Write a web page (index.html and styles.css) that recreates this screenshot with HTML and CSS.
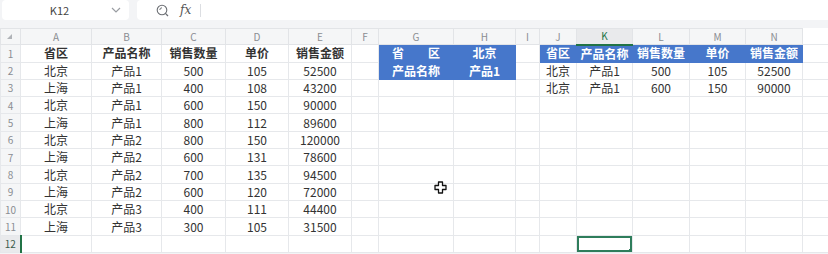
FILE: index.html
```html
<!DOCTYPE html>
<html lang="zh-CN">
<head>
    <meta charset="UTF-8">
    <title>K12</title>
    <link rel="stylesheet" href="styles.css">
</head>
<body>
    <div class="app">
        <div class="toolbar">
            <div class="namebox">
                <span class="ref">K12</span>
                <svg class="chev" width="10" height="6" viewBox="0 0 10 6"><path d="M1 1 L5 5 L9 1" fill="none" stroke="#9a9da2" stroke-width="1.2"/></svg>
            </div>
            <div class="formula">
                <svg class="zoom-ico" width="13" height="13" viewBox="0 0 13 13">
                    <circle cx="6" cy="6" r="4.8" fill="none" stroke="#6b6e73" stroke-width="1.1"/>
                    <path d="M3.8 6 A2.2 2.2 0 0 1 6 3.8" fill="none" stroke="#6b6e73" stroke-width="1"/>
                    <path d="M9.4 9.4 L12 12" stroke="#6b6e73" stroke-width="1.3"/>
                </svg>
                <span class="fx">fx</span>
                <span class="divider"></span>
            </div>
        </div>

        <div class="sheet">
            <table class="grid">
                <colgroup>
                    <col style="width:20px"><col style="width:71px"><col style="width:70px"><col style="width:64px">
                    <col style="width:63px"><col style="width:63px"><col style="width:27px"><col style="width:75px">
                    <col style="width:62px"><col style="width:24px"><col style="width:37px"><col style="width:56px">
                    <col style="width:57px"><col style="width:56px"><col style="width:57px"><col style="width:26px">
                </colgroup>
                <tr class="colhead">
                    <th class="corner"><span class="tri"></span></th>
                    <th>A</th><th>B</th><th>C</th><th>D</th><th>E</th><th>F</th><th>G</th><th>H</th>
                    <th>I</th><th>J</th><th class="cur-col">K</th><th>L</th><th>M</th><th>N</th><th class="off"></th>
                </tr>
                <tr>
                    <th class="rowhead">1</th>
                    <td class="b">省区</td><td class="b">产品名称</td><td class="b">销售数量</td><td class="b">单价</td><td class="b">销售金额</td>
                    <td></td>
                    <td class="blue">省　　区</td><td class="blue">北京</td>
                    <td></td>
                    <td class="blue">省区</td><td class="blue">产品名称</td><td class="blue">销售数量</td><td class="blue">单价</td><td class="blue">销售金额</td>
                    <td></td>
                </tr>
                <tr>
                    <th class="rowhead">2</th>
                    <td>北京</td><td>产品1</td><td>500</td><td>105</td><td>52500</td>
                    <td></td>
                    <td class="blue">产品名称</td><td class="blue">产品1</td>
                    <td></td>
                    <td>北京</td><td>产品1</td><td>500</td><td>105</td><td>52500</td>
                    <td></td>
                </tr>
                <tr>
                    <th class="rowhead">3</th>
                    <td>上海</td><td>产品1</td><td>400</td><td>108</td><td>43200</td>
                    <td></td><td></td><td></td><td></td>
                    <td>北京</td><td>产品1</td><td>600</td><td>150</td><td>90000</td>
                    <td></td>
                </tr>
                <tr>
                    <th class="rowhead">4</th>
                    <td>北京</td><td>产品1</td><td>600</td><td>150</td><td>90000</td>
                    <td></td><td></td><td></td><td></td><td></td><td></td><td></td><td></td><td></td><td></td>
                </tr>
                <tr>
                    <th class="rowhead">5</th>
                    <td>上海</td><td>产品1</td><td>800</td><td>112</td><td>89600</td>
                    <td></td><td></td><td></td><td></td><td></td><td></td><td></td><td></td><td></td><td></td>
                </tr>
                <tr>
                    <th class="rowhead">6</th>
                    <td>北京</td><td>产品2</td><td>800</td><td>150</td><td>120000</td>
                    <td></td><td></td><td></td><td></td><td></td><td></td><td></td><td></td><td></td><td></td>
                </tr>
                <tr>
                    <th class="rowhead">7</th>
                    <td>上海</td><td>产品2</td><td>600</td><td>131</td><td>78600</td>
                    <td></td><td></td><td></td><td></td><td></td><td></td><td></td><td></td><td></td><td></td>
                </tr>
                <tr>
                    <th class="rowhead">8</th>
                    <td>北京</td><td>产品2</td><td>700</td><td>135</td><td>94500</td>
                    <td></td><td></td><td></td><td></td><td></td><td></td><td></td><td></td><td></td><td></td>
                </tr>
                <tr>
                    <th class="rowhead">9</th>
                    <td>上海</td><td>产品2</td><td>600</td><td>120</td><td>72000</td>
                    <td></td><td></td><td></td><td></td><td></td><td></td><td></td><td></td><td></td><td></td>
                </tr>
                <tr>
                    <th class="rowhead">10</th>
                    <td>北京</td><td>产品3</td><td>400</td><td>111</td><td>44400</td>
                    <td></td><td></td><td></td><td></td><td></td><td></td><td></td><td></td><td></td><td></td>
                </tr>
                <tr>
                    <th class="rowhead">11</th>
                    <td>上海</td><td>产品3</td><td>300</td><td>105</td><td>31500</td>
                    <td></td><td></td><td></td><td></td><td></td><td></td><td></td><td></td><td></td><td></td>
                </tr>
                <tr>
                    <th class="rowhead cur-row">12</th>
                    <td></td><td></td><td></td><td></td><td></td>
                    <td></td><td></td><td></td><td></td><td></td>
                    <td class="selected"><span class="handle"></span></td>
                    <td></td><td></td><td></td><td></td>
                </tr>
            </table>

            <svg class="pointer" width="13" height="13" viewBox="0 0 13 13">
                <path d="M4.5 1 H8.5 V4.5 H12 V8.5 H8.5 V12 H4.5 V8.5 H1 V4.5 H4.5 Z" fill="#fff" stroke="#111" stroke-width="1.3" stroke-linejoin="round"/>
            </svg>
        </div>
    </div>
</body>
</html>
```

FILE: styles.css
```css
*{
    margin: 0;
    padding: 0;
    box-sizing: border-box;
}
body{
    background: #f3f4f6;
    font-family: "Noto Sans CJK SC", "Noto Sans", sans-serif;
    color: #333;
    width: 828px;
    height: 254px;
    overflow: hidden;
}
.toolbar{
    height: 21px;
    display: flex;
    gap: 8px;
    padding: 0 0 0 2px;
    margin-bottom: 7px;
}
.namebox{
    width: 127px;
    height: 20px;
    background: #fff;
    border-radius: 4px;
    display: flex;
    align-items: center;
    position: relative;
}
.namebox .ref{
    flex: 1;
    text-align: center;
    font-size: 11px;
    color: #444;
    padding-left: 6px;
}
.namebox .chev{
    margin-right: 8px;
}
.formula{
    flex: 1;
    height: 20px;
    background: #fff;
    border-radius: 4px 0 0 4px;
    display: flex;
    align-items: center;
    padding-left: 19px;
}
.fx{
    font-family: "DejaVu Serif", serif;
    font-style: italic;
    font-size: 12px;
    color: #555;
    margin-left: 11px;
}
.divider{
    width: 1px;
    height: 13px;
    background: #dcdee2;
    margin-left: 9px;
}
.sheet{
    position: relative;
    background: #fff;
}
.grid{
    table-layout: fixed;
    width: 828px;
    border-collapse: collapse;
    font-size: 12px;
}
.grid td, .grid th{
    border: 1px solid #e6e8eb;
    text-align: center;
    white-space: nowrap;
    overflow: hidden;
    padding: 0;
}
.grid tr{
    height: 17.33px;
}
.grid td{
    line-height: 16px;
}
.grid .colhead{
    height: 16px;
}
.colhead th{
    background: #f5f6f7;
    font-weight: normal;
    font-size: 10px;
    color: #8a8d92;
    line-height: 14px;
    border-color: #e2e4e7;
}
.colhead th.off{
    background: #fff;
    border-color: #fff #fff #e6e8eb #fff;
}
.corner{
    position: relative;
}
.tri{
    position: absolute;
    left: 6px;
    top: 5px;
    width: 0;
    height: 0;
    border-left: 5px solid transparent;
    border-bottom: 5px solid #b0b3b8;
}
.rowhead{
    background: #f5f6f7;
    font-weight: normal;
    font-size: 10px;
    color: #8a8d92;
    border-color: #e2e4e7;
}
.colhead th.cur-col{
    background: #e9eaec;
    color: #217346;
    border-bottom: 2px solid #217346;
}
.rowhead.cur-row{
    background: #e9eaec;
    color: #3b5a4a;
    border-right: 2px solid #217346;
}
.b{
    font-weight: bold;
}
.grid td.blue{
    background: #4677cb;
    border-color: #4677cb;
    color: #fff;
    font-weight: bold;
}
.selected{
    position: relative;
    box-shadow: inset 0 0 0 2px #2e7d5b;
}
.handle{
    position: absolute;
    right: -1px;
    bottom: -1px;
    width: 4px;
    height: 4px;
    background: #2e7d5b;
}
.pointer{
    position: absolute;
    left: 434px;
    top: 153px;
}
```
